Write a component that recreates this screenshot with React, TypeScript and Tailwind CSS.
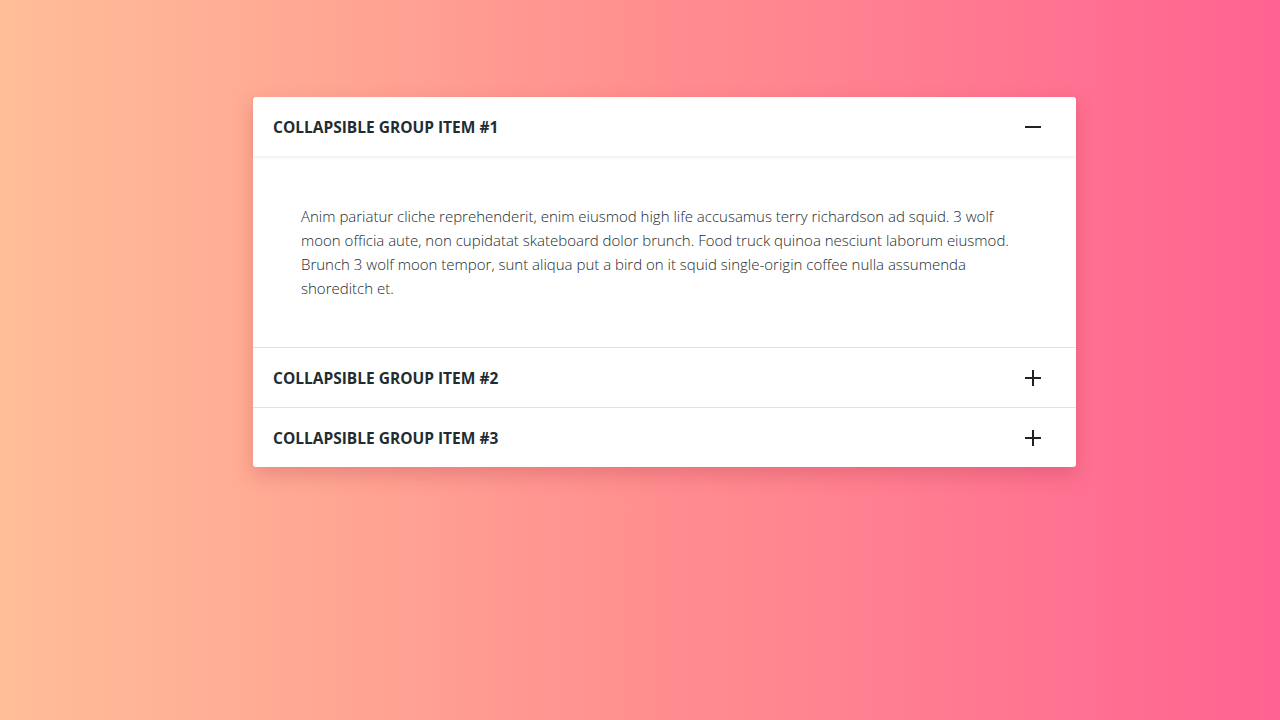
import React, { useState } from 'react';

const items = [
  {
    title: 'Collapsible Group Item #1',
    body: 'Anim pariatur cliche reprehenderit, enim eiusmod high life accusamus terry richardson ad squid. 3 wolf moon officia aute, non cupidatat skateboard dolor brunch. Food truck quinoa nesciunt laborum eiusmod. Brunch 3 wolf moon tempor, sunt aliqua put a bird on it squid single-origin coffee nulla assumenda shoreditch et.',
  },
  {
    title: 'Collapsible Group Item #2',
    body: 'Anim pariatur cliche reprehenderit, enim eiusmod high life accusamus terry richardson ad squid. 3 wolf moon officia aute, non cupidatat skateboard dolor brunch.',
  },
  {
    title: 'Collapsible Group Item #3',
    body: 'Food truck quinoa nesciunt laborum eiusmod. Brunch 3 wolf moon tempor, sunt aliqua put a bird on it squid single-origin coffee nulla assumenda shoreditch et.',
  },
];

const App: React.FC = () => {
  const [open, setOpen] = useState<number | null>(0);

  return (
    <div className="min-h-screen w-full bg-gradient-to-r from-[#ffbe98] via-[#ff8f8f] to-[#ff6292] pt-[97px] font-['Open_Sans',sans-serif]">
      <div className="ml-[253px] w-[823px] rounded-[3px] bg-white shadow-[0_8px_20px_rgba(160,40,60,0.25)]">
        {items.map((item, index) => {
          const isOpen = open === index;
          return (
            <div key={index} className={index > 0 ? 'border-t border-[#e2e2e2]' : ''}>
              <button
                onClick={() => setOpen(isOpen ? null : index)}
                className={`flex h-[59px] w-full items-center justify-between pl-5 pr-[35px] pt-[2px] text-left ${
                  isOpen ? 'shadow-[0_2px_3px_rgba(0,0,0,0.06)]' : ''
                }`}
              >
                <span className="text-[15.5px] font-bold uppercase text-[#1f2d33]">{item.title}</span>
                <span className="relative -mt-[2px] block h-4 w-4">
                  <span className="absolute left-0 top-[7px] h-[2px] w-4 bg-[#222]" />
                  {!isOpen && <span className="absolute left-[7px] top-0 h-4 w-[2px] bg-[#222]" />}
                </span>
              </button>
              {isOpen && (
                <div className="px-12 pt-[48px] pb-[47px]">
                  <p className="text-[15px] font-light leading-6 text-[#1a2b2e]">{item.body}</p>
                </div>
              )}
            </div>
          );
        })}
      </div>
    </div>
  );
};

export default App;
